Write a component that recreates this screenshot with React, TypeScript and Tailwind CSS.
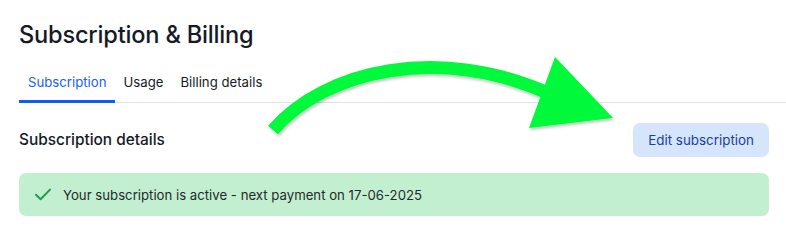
import React from "react";

export default function App() {
  return (
    <div className="relative w-[786px] h-[228px] overflow-hidden bg-white font-['Inter',sans-serif] text-[#141a26]">
      <div className="pl-[19px] pt-[19px]">
        <h1 className="text-[23.6px] leading-[32px] font-medium tracking-[-0.2px]">Subscription &amp; Billing</h1>
        <div className="mt-[13px] flex border-b border-[#dde3ea]">
          <div className="-mb-px px-[9px] pt-[8px] pb-[8px] border-b-[3px] border-[#0a5cf5] text-[13.2px] leading-[20px] text-[#1a5cff]">Subscription</div>
          <div className="-mb-px pl-[8px] pr-[9px] pt-[8px] pb-[8px] border-b-[3px] border-transparent text-[13.2px] leading-[20px]">Usage</div>
          <div className="-mb-px pl-[8px] pr-[9px] pt-[8px] pb-[8px] border-b-[3px] border-transparent text-[13.2px] leading-[20px]">Billing details</div>
        </div>
        <div className="pr-[17px]">
          <div className="mt-[20px] flex items-center justify-between">
            <div className="text-[15.4px] leading-[20px] font-medium">Subscription details</div>
            <button className="h-[34px] px-[15px] rounded-[7px] bg-[#d5e5fb] text-[13.4px] text-[#1c3f9e]">Edit subscription</button>
          </div>
          <div className="mt-[16px] h-[43px] flex items-center rounded-[7px] bg-[#c3efd1] pl-[16px]">
            <svg width="16" height="13" viewBox="0 0 16 13" className="mr-[12px]">
              <path d="M1 6.8 L5.6 11.2 L15 1.6" fill="none" stroke="#1f9d4f" strokeWidth="2" strokeLinecap="round" strokeLinejoin="round" />
            </svg>
            <span className="text-[13.2px] leading-[20px] text-[#1f2a2a]">Your subscription is active - next payment on 17-06-2025</span>
          </div>
        </div>
      </div>
      <svg className="absolute inset-0 pointer-events-none" width="786" height="228" viewBox="0 0 786 228">
        <defs>
          <filter id="sh" x="-20%" y="-20%" width="140%" height="140%">
            <feDropShadow dx="1" dy="2" stdDeviation="1.5" floodColor="#000" floodOpacity="0.25" />
          </filter>
        </defs>
        <g filter="url(#sh)">
          <path d="M273 130 C 325 70, 440 44, 550 94" fill="none" stroke="#00f93a" strokeWidth="13" />
          <polygon points="555,57 613,118 529,128" fill="#00f93a" />
        </g>
      </svg>
    </div>
  );
}
